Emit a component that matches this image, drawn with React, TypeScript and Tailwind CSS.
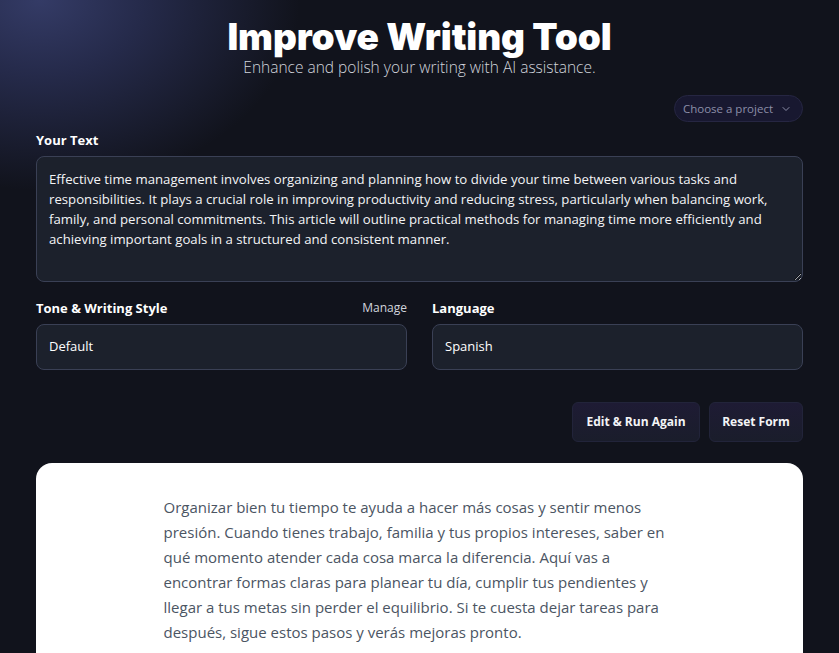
import { ChevronDown } from "lucide-react";

const body = { fontFamily: '"Open Sans", "Noto Sans", sans-serif' };

const text =
  "Effective time management involves organizing and planning how to divide your time between various tasks and responsibilities. It plays a crucial role in improving productivity and reducing stress, particularly when balancing work, family, and personal commitments. This article will outline practical methods for managing time more efficiently and achieving important goals in a structured and consistent manner.";

export default function App() {
  return (
    <div
      className="min-h-screen w-full bg-[#11131c] bg-[radial-gradient(ellipse_260px_190px_at_40px_0px,#343b66_0%,#252a4a_40%,#11131c_100%)] text-white"
      style={body}
    >
      <div className="px-9 pt-[18px]">
        <div className="flex flex-col items-center">
          <h1
            className="text-[37px] font-black leading-[38px] tracking-[-0.1px]"
            style={{ fontFamily: '"Inter", sans-serif' }}
          >
            Improve Writing Tool
          </h1>
          <p className="mt-[3px] text-[15.5px] leading-[17px] font-light text-gray-300">
            Enhance and polish your writing with AI assistance.
          </p>
        </div>

        <div className="mt-[19px] flex justify-end">
          <button className="flex h-[27px] items-center gap-[7px] rounded-full border border-[#262642] bg-[#181830] pl-[8px] pr-[10px] text-[11.5px] text-[#8c8ea8]">
            Choose a project
            <ChevronDown className="h-[12px] w-[12px]" strokeWidth={2} />
          </button>
        </div>

        <label className="mt-[8px] block text-[13px] font-bold leading-[20px]">Your Text</label>
        <textarea
          readOnly
          defaultValue={text}
          style={body}
          className="mt-[6px] block h-[126px] w-full rounded-lg border border-[#3a4055] bg-[#1c212c] px-[12px] py-[12px] text-[13.2px] leading-[20px] text-gray-100 outline-none"
        />

        <div className="mt-[16px] grid grid-cols-2 gap-[25px]">
          <div>
            <div className="flex items-center justify-between">
              <span className="text-[13px] font-bold leading-[20px]">Tone &amp; Writing Style</span>
              <span className="text-[12px] text-gray-300">Manage</span>
            </div>
            <div className="mt-[6px] flex h-[46px] items-center rounded-lg border border-[#3a4055] bg-[#1c212c] px-[12px] text-[13px]">
              Default
            </div>
          </div>
          <div>
            <div className="flex items-center">
              <span className="text-[13px] font-bold leading-[20px]">Language</span>
            </div>
            <div className="mt-[6px] flex h-[46px] items-center rounded-lg border border-[#3a4055] bg-[#1c212c] px-[12px] text-[13px]">
              Spanish
            </div>
          </div>
        </div>

        <div className="mt-[32px] flex justify-end gap-[9px]">
          <button className="h-[40px] w-[128px] rounded-md border border-[#22243a] bg-gradient-to-b from-[#1e1b34] to-[#1a1d2b] text-[12px] font-bold text-gray-100">
            Edit &amp; Run Again
          </button>
          <button className="h-[40px] w-[94px] rounded-md border border-[#22243a] bg-gradient-to-b from-[#1e1b34] to-[#1a1d2b] text-[12px] font-bold text-gray-100">
            Reset Form
          </button>
        </div>

        <div className="mt-[21px] rounded-t-2xl bg-white pb-[40px] pt-[32px]">
          <p className="mx-auto max-w-[512px] text-[15px] leading-[25px] text-[#4b5563]">
            Organizar bien tu tiempo te ayuda a hacer más cosas y sentir menos presión. Cuando tienes trabajo, familia y
            tus propios intereses, saber en qué momento atender cada cosa marca la diferencia. Aquí vas a encontrar
            formas claras para planear tu día, cumplir tus pendientes y llegar a tus metas sin perder el equilibrio. Si
            te cuesta dejar tareas para después, sigue estos pasos y verás mejoras pronto.
          </p>
        </div>
      </div>
    </div>
  );
}
